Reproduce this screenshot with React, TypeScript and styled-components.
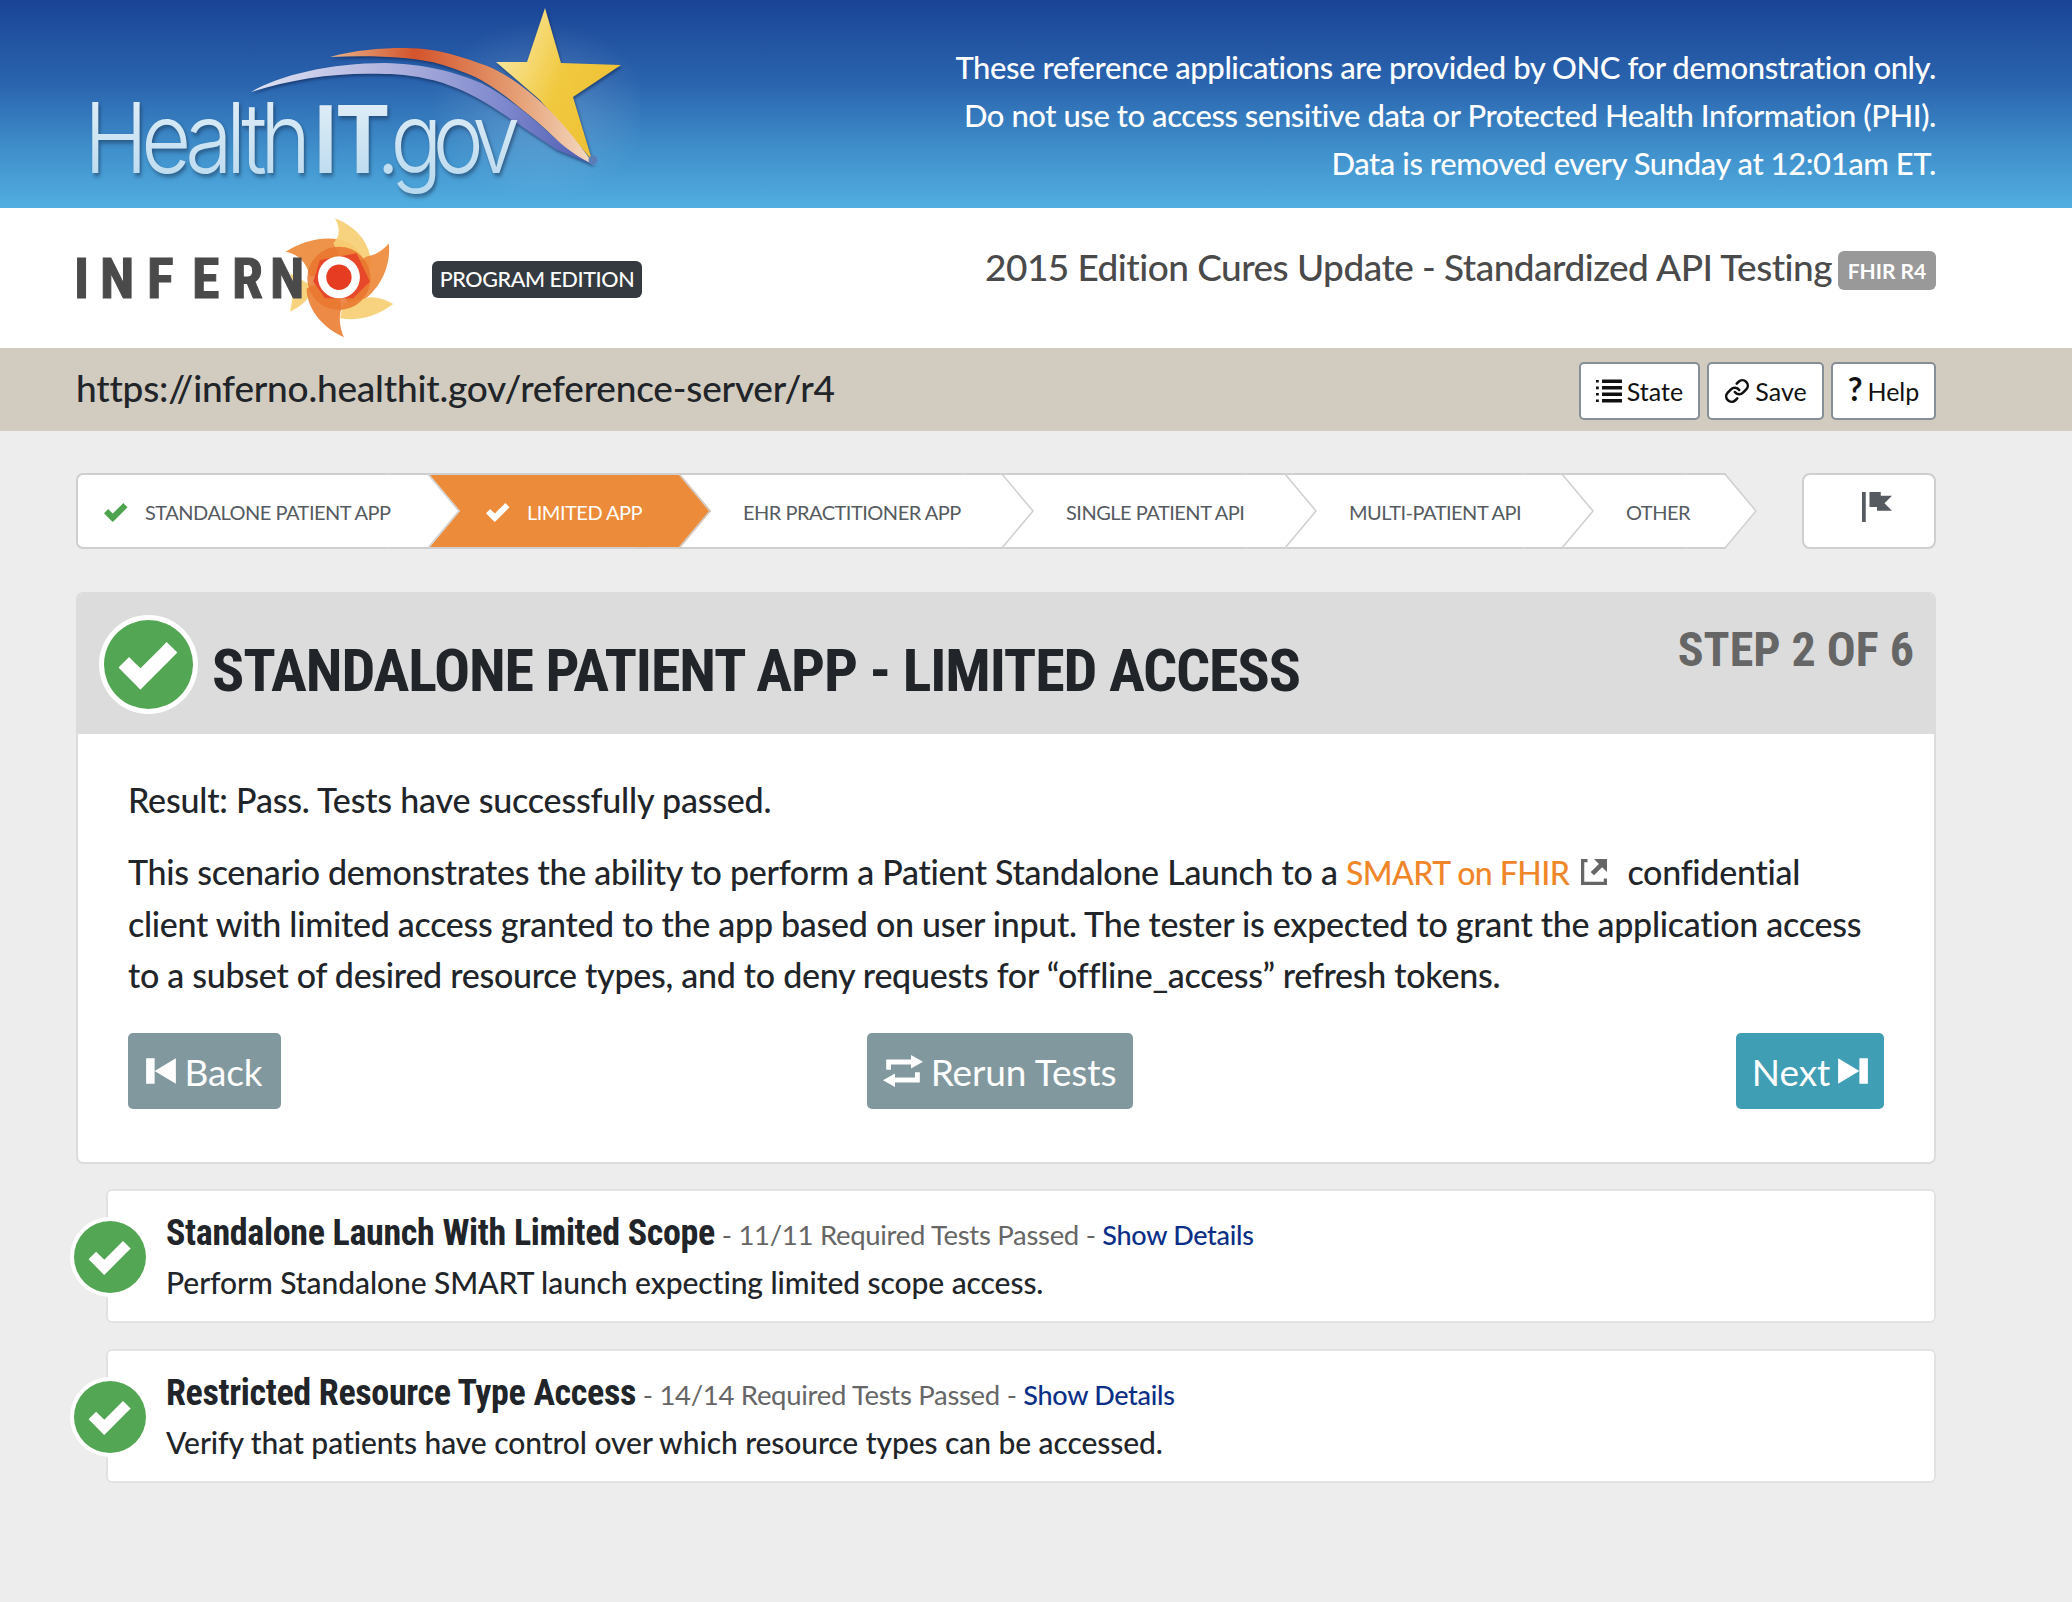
import React from 'react';
import styled, { createGlobalStyle } from 'styled-components';
import { Link } from 'lucide-react';

const GlobalStyle = createGlobalStyle`
  html, body {
    margin: 0;
    padding: 0;
    background: #ededed;
    font-family: 'Lato', 'Open Sans', sans-serif;
    color: #212529;
  }
`;

const Page = styled.div`
  min-height: 1602px;
  background: #ededed;
`;

const Banner = styled.header`
  height: 208px;
  display: flex;
  justify-content: space-between;
  background: linear-gradient(180deg, #1a4496 0%, #2a64ae 40%, #3f8fcb 72%, #52aee0 100%);
`;

const BannerLogo = styled.svg`
  width: 640px;
  height: 208px;
  flex: none;
`;

const LogoText = styled.text<{ $bold?: boolean }>`
  font-family: ${(p) => (p.$bold ? "'Liberation Sans'" : "'Inter'")}, sans-serif;
  font-weight: ${(p) => (p.$bold ? 700 : 300)};
  font-size: 98px;
  filter: drop-shadow(2px 3px 2px rgba(20, 40, 70, 0.5));
`;

const Swooshes = styled.g`
  filter: drop-shadow(1px 2px 1.5px rgba(15, 35, 80, 0.6));
`;

const BannerNotice = styled.div`
  padding: 43px 136px 0 0;
  color: #fff;
  text-align: right;
  font-size: 31px;
  font-weight: 500;
  line-height: 48px;
  letter-spacing: -0.43px;
`;

const Masthead = styled.div`
  height: 140px;
  background: #fff;
  display: flex;
  justify-content: space-between;
  padding: 0 136px 0 76px;
  box-sizing: border-box;
`;

const Brand = styled.div`
  display: flex;
  align-items: center;
`;

const InfernoLogo = styled.svg`
  width: 346px;
  height: 140px;
  margin-left: -6px;
  flex: none;
`;

const InfernoWord = styled.text`
  font-family: 'Roboto', sans-serif;
  font-stretch: 75%;
  font-weight: 700;
  font-size: 56px;
  fill: #4a4a4a;
  stroke: #4a4a4a;
  stroke-width: 1px;
`;

const EditionBadge = styled.span`
  margin: 2px 0 0 16px;
  width: 210px;
  height: 37px;
  background: #343a40;
  color: #fff;
  border-radius: 6px;
  font-size: 21.5px;
  font-weight: 500;
  letter-spacing: -0.4px;
  line-height: 37px;
  text-align: center;
  white-space: nowrap;
`;

const Subtitle = styled.div`
  display: flex;
  align-items: center;
  gap: 6px;
  height: 116px;
  font-size: 37px;
  font-weight: 500;
  letter-spacing: -0.53px;
  color: #4a4a4a;
`;

const VersionBadge = styled.span`
  width: 98px;
  height: 39px;
  margin-top: 8px;
  background: #999;
  color: #fff;
  border-radius: 6px;
  font-size: 21px;
  font-weight: 700;
  letter-spacing: 0;
  line-height: 39px;
  text-align: center;
`;

const ServerBar = styled.div`
  height: 83px;
  box-sizing: border-box;
  background: #d1cbc0;
  display: flex;
  align-items: center;
  justify-content: space-between;
  padding: 0 136px 0 76px;
`;

const ServerUrl = styled.div`
  margin-top: -4px;
  font-size: 37px;
  font-weight: 500;
  letter-spacing: -0.21px;
  color: #212529;
`;

const ServerActions = styled.div`
  display: flex;
  gap: 7px;
  margin-top: 3px;
`;

const ActionButton = styled.button<{ $width: number }>`
  width: ${(p) => p.$width}px;
  height: 58px;
  box-sizing: border-box;
  background: #fff;
  border: 2px solid #868e96;
  border-radius: 5px;
  display: flex;
  align-items: center;
  justify-content: center;
  gap: 5px;
  font-family: inherit;
  font-size: 25px;
  color: #111;
  padding: 0;
`;

const QuestionGlyph = styled.span`
  font-size: 32px;
  font-weight: 700;
  margin-top: -6px;
`;

const Main = styled.main`
  padding: 42px 136px 0 76px;
`;

const StepperRow = styled.div`
  display: flex;
  justify-content: space-between;
  height: 76px;
`;

const Stepper = styled.ol`
  display: flex;
  list-style: none;
  margin: 0;
  padding: 0;
`;

const Step = styled.li<{ $width: number; $lead: number; $active?: boolean; $order: number; $first?: boolean }>`
  position: relative;
  z-index: ${(p) => p.$order};
  width: ${(p) => p.$width}px;
  height: 76px;
  margin-right: 2px;
  box-sizing: border-box;
  display: flex;
  align-items: center;
  padding-left: ${(p) => p.$lead}px;
  background: ${(p) => (p.$active ? '#ec8c3a' : '#fff')};
  border: 2px solid #cfcfcf;
  border-right: 0;
  border-left: ${(p) => (p.$first ? '2px solid #cfcfcf' : '0')};
  border-radius: ${(p) => (p.$first ? '7px 0 0 7px' : '0')};
  color: ${(p) => (p.$active ? '#fff' : '#555b61')};
  font-size: 20px;
  letter-spacing: -0.5px;
  white-space: nowrap;

  &::before,
  &::after {
    content: '';
    position: absolute;
    right: -36px;
    width: 40px;
    height: 38px;
    box-sizing: border-box;
    background: ${(p) => (p.$active ? '#ec8c3a' : '#fff')};
    border-right: 2px solid #cfcfcf;
  }

  &::before {
    top: -2px;
    border-top: 2px solid #cfcfcf;
    transform: skewX(40deg);
    transform-origin: 50% 100%;
  }

  &::after {
    bottom: -2px;
    border-bottom: 2px solid #cfcfcf;
    transform: skewX(-40deg);
    transform-origin: 50% 0;
  }
`;

const StepContent = styled.span`
  position: relative;
  z-index: 1;
  margin-top: 2px;
  display: flex;
  align-items: center;
  gap: 17px;
`;

const FlagButton = styled.div`
  width: 134px;
  height: 76px;
  box-sizing: border-box;
  background: #fff;
  border: 2px solid #cfcfcf;
  border-radius: 8px;
  display: flex;
  justify-content: center;
  padding: 17px 0 0 16px;
`;

const Panel = styled.section`
  margin-top: 43px;
  background: #fff;
  border: 2px solid #dcdcdc;
  border-radius: 7px;
  overflow: hidden;
`;

const PanelHead = styled.div`
  position: relative;
  height: 140px;
  background: #dcdcdc;
  display: flex;
  align-items: center;
  gap: 14px;
  padding-left: 21px;
`;

const PanelTitle = styled.h1`
  margin: 12px 0 0;
  font-family: 'Roboto', sans-serif;
  font-stretch: 75%;
  font-weight: 700;
  font-size: 60px;
  letter-spacing: -1.15px;
  color: #212529;
  white-space: nowrap;
`;

const StepCount = styled.div`
  position: absolute;
  top: 27px;
  right: 20px;
  font-family: 'Roboto', sans-serif;
  font-stretch: 75%;
  font-weight: 700;
  font-size: 48px;
  color: #666;
`;

const PanelBody = styled.div`
  padding: 41px 50px 53px;
`;

const ResultLine = styled.p`
  margin: 0 0 21px;
  font-size: 34px;
  font-weight: 500;
  letter-spacing: -0.2px;
  line-height: 50px;
`;

const Description = styled.p`
  margin: 0;
  font-size: 34px;
  font-weight: 500;
  letter-spacing: -0.28px;
  line-height: 51px;
`;

const OrangeLink = styled.span`
  color: #f0862a;
  font-size: 32px;
  letter-spacing: -0.55px;
`;

const ExternalIcon = styled.svg`
  width: 26px;
  height: 26px;
  margin: 0 20px 0 12px;
  fill: #666;
`;

const NavRow = styled.div`
  display: flex;
  justify-content: space-between;
  margin-top: 33px;
`;

const NavButton = styled.div<{ $color: string; $width: number; $shift?: number }>`
  width: ${(p) => p.$width}px;
  height: 76px;
  margin-right: ${(p) => p.$shift ?? 0}px;
  background: ${(p) => p.$color};
  border-radius: 5px;
  display: flex;
  align-items: center;
  justify-content: center;
  gap: 8px;
  color: #fff;
  font-size: 37px;
  letter-spacing: -0.1px;
`;

const NavIcon = styled.svg<{ $w: number }>`
  width: ${(p) => p.$w}px;
  height: 34px;
  fill: #fff;
`;

const TestGroups = styled.div`
  margin: 25px 0 0 30px;
  display: flex;
  flex-direction: column;
  gap: 26px;
`;

const TestCard = styled.article`
  position: relative;
  height: 134px;
  box-sizing: border-box;
  background: #fff;
  border: 2px solid #e2e2e2;
  border-radius: 6px;
  padding: 21px 0 0 58px;
`;

const CardBadge = styled.div`
  position: absolute;
  left: -38px;
  top: 26px;
`;

const TestHeading = styled.div`
  display: flex;
  align-items: baseline;
  height: 47px;
  white-space: pre;
`;

const TestName = styled.span`
  font-family: 'Roboto', sans-serif;
  font-stretch: 75%;
  font-weight: 700;
  font-size: 36px;
  letter-spacing: -0.33px;
  color: #212529;
`;

const TestCount = styled.span`
  font-size: 27.5px;
  letter-spacing: -0.3px;
  color: #666;
`;

const DetailsLink = styled.span`
  font-size: 27px;
  font-weight: 500;
  letter-spacing: -0.3px;
  color: #0b2f87;
`;

const TestSummary = styled.div`
  font-size: 30px;
  font-weight: 500;
  letter-spacing: -0.07px;
  line-height: 46px;
`;

const CHECK = 'M6.41 0l-.69.72-2.78 2.78-.81-.78-.72-.72-1.41 1.41.72.72 1.5 1.5.69.72.72-.72 3.5-3.5.72-.72-1.44-1.41z';

const CheckIcon: React.FC<{ size: number; color: string }> = ({ size, color }) => (
  <svg width={size} height={size} viewBox="0 0 8 8">
    <path d={CHECK} transform="translate(0 1)" fill={color} />
  </svg>
);

const PassBadge: React.FC<{ size: number; ring: number; check: number }> = ({ size, ring, check }) => (
  <svg width={size} height={size} viewBox={`0 0 ${size} ${size}`}>
    <circle cx={size / 2} cy={size / 2} r={size / 2} fill="#fff" />
    <circle cx={size / 2} cy={size / 2} r={size / 2 - ring} fill="#53a653" />
    <svg x={(size - check) / 2} y={(size - check) / 2} width={check} height={check} viewBox="0 0 8 8">
      <path d={CHECK} transform="translate(0 1)" fill="#fff" />
    </svg>
  </svg>
);

const steps = [
  { label: 'STANDALONE PATIENT APP', width: 348, lead: 26, done: true },
  { label: 'LIMITED APP', width: 249, lead: 60, done: true, active: true },
  { label: 'EHR PRACTITIONER APP', width: 321, lead: 66 },
  { label: 'SINGLE PATIENT API', width: 281, lead: 66 },
  { label: 'MULTI-PATIENT API', width: 275, lead: 66 },
  { label: 'OTHER', width: 161, lead: 66 },
];

const petals = [
  { d: 'M60 305 C 70 270 72 220 60 190 L 130 230 L 110 270 C 95 285 80 295 60 305 Z', fill: '#f6cf74' },
  { d: 'M47 125 C 100 90 180 70 240 100 C 270 120 280 140 285 170 L 120 200 C 110 160 90 135 47 125 Z', fill: '#ec8b3b' },
  { d: 'M195 25 C 260 50 305 100 305 175 L 240 200 L 190 100 C 210 80 212 55 195 25 Z', fill: '#f6cf74' },
  { d: 'M357 100 C 365 180 320 260 240 295 L 200 200 L 290 140 C 320 135 340 120 357 100 Z', fill: '#ee8a3c' },
  { d: 'M370 282 C 320 320 260 335 210 325 L 220 280 L 300 262 C 325 262 350 270 370 282 Z', fill: '#f6cf74' },
  { d: 'M222 382 C 150 350 110 290 110 235 L 200 200 L 215 295 C 205 320 210 355 222 382 Z', fill: '#ec8036' },
];

const App: React.FC = () => (
  <Page>
    <GlobalStyle />
    <Banner>
      <BannerLogo viewBox="0 0 640 208">
        <defs>
          <radialGradient id="starGlow">
            <stop offset="0" stopColor="#fff" stopOpacity="0.18" />
            <stop offset="1" stopColor="#fff" stopOpacity="0" />
          </radialGradient>
          <linearGradient id="starFill" x1="0" y1="0" x2="1" y2="0.5">
            <stop offset="0" stopColor="#fbeeb8" />
            <stop offset="0.6" stopColor="#f1c93f" />
            <stop offset="1" stopColor="#eec136" />
          </linearGradient>
          <linearGradient id="swooshOrange" x1="0" y1="0" x2="1" y2="0">
            <stop offset="0" stopColor="#e8b48a" />
            <stop offset="0.32" stopColor="#d4542c" />
            <stop offset="0.7" stopColor="#e59d72" />
            <stop offset="1" stopColor="#f4dcc4" />
          </linearGradient>
          <linearGradient id="swooshPurple" x1="0" y1="0" x2="1" y2="0">
            <stop offset="0" stopColor="#dfe2f2" />
            <stop offset="0.4" stopColor="#b0b4de" />
            <stop offset="0.75" stopColor="#7c86cc" />
            <stop offset="1" stopColor="#4a5aaf" />
          </linearGradient>
          <linearGradient id="logoText" x1="0" y1="0" x2="0" y2="1">
            <stop offset="0" stopColor="#e6f1f8" />
            <stop offset="1" stopColor="#b6d8ee" />
          </linearGradient>
        </defs>
        <ellipse cx="540" cy="110" rx="110" ry="90" fill="url(#starGlow)" />
        <Swooshes>
          <polygon points="545,8 561,63 621,65 573,97 592,160 540,100 496,62 527,62" fill="url(#starFill)" />
          <path d="M251 92 C 280 75 330 63 385 63 C 425 64 455 72 481 83 C 510 98 535 120 557 140 L 594 165 L 557 150 C 535 135 515 122 500 112 C 480 98 460 89 443 83 C 420 76 400 74 385 74 C 340 72 295 78 251 92 Z" fill="url(#swooshPurple)" />
          <path d="M330 57 C 355 50 380 48 404 48 C 425 48 440 51 454 55 C 470 60 484 64 496 70 C 515 80 530 92 542 103 C 560 120 577 140 594 165 C 580 158 568 150 557 140 C 545 128 532 117 519 107 C 507 97 495 88 481 80 C 468 73 455 69 443 65 C 430 61 416 59 404 58 C 380 56 355 56 330 57 Z" fill="url(#swooshOrange)" />
        </Swooshes>
        <circle cx="593" cy="160" r="4.5" fill="#5a7db8" />
        <LogoText transform="translate(84 173) scale(.88 1)" fill="url(#logoText)" textLength="258" lengthAdjust="spacing">Health</LogoText>
        <LogoText $bold transform="translate(314 173) scale(.85 1)" fill="url(#logoText)">IT</LogoText>
        <LogoText transform="translate(376 173) scale(.88 1)" fill="url(#logoText)" textLength="164" lengthAdjust="spacing">.gov</LogoText>
      </BannerLogo>
      <BannerNotice>
        <div>These reference applications are provided by ONC for demonstration only.</div>
        <div>Do not use to access sensitive data or Protected Health Information (PHI).</div>
        <div>Data is removed every Sunday at 12:01am ET.</div>
      </BannerNotice>
    </Banner>

    <Masthead>
      <Brand>
        <InfernoLogo viewBox="70 208 346 140">
          <g transform="translate(270 210) scale(0.333)">
            {petals.map((p) => (
              <path key={p.d} d={p.d} fill={p.fill} opacity="0.92" />
            ))}
            <circle cx="207" cy="205" r="95" fill="#e9762e" opacity="0.85" />
            <polygon points="150,150 260,130 300,215 250,265 165,265 130,215" fill="#e8482a" />
            <circle cx="207" cy="202" r="63" fill="#fff" />
            <circle cx="207" cy="202" r="38" fill="#e63c22" />
          </g>
          <InfernoWord x="74 100 147 192 232 270" y="298">INFERN</InfernoWord>
        </InfernoLogo>
        <EditionBadge>PROGRAM EDITION</EditionBadge>
      </Brand>
      <Subtitle>
        2015 Edition Cures Update - Standardized API Testing
        <VersionBadge>FHIR R4</VersionBadge>
      </Subtitle>
    </Masthead>

    <ServerBar>
      <ServerUrl>https://inferno.healthit.gov/reference-server/r4</ServerUrl>
      <ServerActions>
        <ActionButton $width={121}>
          <svg width="26" height="24" viewBox="0 0 13 12" fill="#111">
            <path d="M0 .5h1.4v1.3H0zM0 3.8h1.4v1.3H0zM0 7h1.4v1.3H0zM0 10.2h1.4v1.3H0zM3 .2h10v1.8H3zM3 3.5h10v1.8H3zM3 6.7h10v1.8H3zM3 10h10v1.8H3z" />
          </svg>
          State
        </ActionButton>
        <ActionButton $width={117}>
          <Link size={26} strokeWidth={2.4} color="#111" />
          Save
        </ActionButton>
        <ActionButton $width={105}>
          <QuestionGlyph>?</QuestionGlyph>
          Help
        </ActionButton>
      </ServerActions>
    </ServerBar>

    <Main>
      <StepperRow>
        <Stepper>
          {steps.map((s, i) => (
            <Step key={s.label} $width={s.width} $lead={s.lead} $active={s.active} $first={i === 0} $order={steps.length - i}>
              <StepContent>
                {s.done && <CheckIcon size={24} color={s.active ? '#fff' : '#4ea44e'} />}
                {s.label}
              </StepContent>
            </Step>
          ))}
        </Stepper>
        <FlagButton>
          <svg width="30" height="30" viewBox="0 0 8 8" fill="#555b61">
            <path d="M0 0v8h1v-8h-1zm2 0v4h2v1h4l-2-1.97 2-2.03h-3v-1h-3z" />
          </svg>
        </FlagButton>
      </StepperRow>

      <Panel>
        <PanelHead>
          <PassBadge size={99} ring={5} check={60} />
          <PanelTitle>STANDALONE PATIENT APP - LIMITED ACCESS</PanelTitle>
          <StepCount>STEP 2 OF 6</StepCount>
        </PanelHead>
        <PanelBody>
          <ResultLine>Result: Pass. Tests have successfully passed.</ResultLine>
          <Description>
            This scenario demonstrates the ability to perform a Patient Standalone Launch to a <OrangeLink>SMART on FHIR</OrangeLink>
            <ExternalIcon viewBox="0 0 8 8">
              <path d="M0 0v8h8v-2h-1v1h-6v-6h1v-1h-2zm4 0l1.5 1.5-2.5 2.5 1 1 2.5-2.5 1.5 1.5v-4h-4z" />
            </ExternalIcon>
            confidential client with limited access granted to the app based on user input. The tester is expected to grant the application access to a subset of desired resource types, and to deny requests for “offline_access” refresh tokens.
          </Description>
          <NavRow>
            <NavButton $color="#81999e" $width={153}>
              <NavIcon $w={30} viewBox="0 0 7 8">
                <path d="M0 1v6h2v-6h-2zm2 3l5 3v-6l-5 3z" />
              </NavIcon>
              Back
            </NavButton>
            <NavButton $color="#81999e" $width={266} $shift={18}>
              <NavIcon $w={40} viewBox="0 0 10 8">
                <path d="M7 0l3 1.7-3 1.7V2.4H2v1.3H.8V1.1H7zM3 8L0 6.3l3-1.7v1h5V4.3h1.2v2.6H3z" />
              </NavIcon>
              Rerun Tests
            </NavButton>
            <NavButton $color="#3f9eb3" $width={148}>
              Next
              <NavIcon $w={30} viewBox="0 0 7 8">
                <path d="M0 1v6l5-3-5-3zm5 3v3h2v-6h-2v3z" />
              </NavIcon>
            </NavButton>
          </NavRow>
        </PanelBody>
      </Panel>

      <TestGroups>
        <TestCard>
          <CardBadge><PassBadge size={80} ring={4} check={43} /></CardBadge>
          <TestHeading>
            <TestName>Standalone Launch With Limited Scope</TestName>
            <TestCount> - 11/11 Required Tests Passed - </TestCount>
            <DetailsLink>Show Details</DetailsLink>
          </TestHeading>
          <TestSummary>Perform Standalone SMART launch expecting limited scope access.</TestSummary>
        </TestCard>
        <TestCard>
          <CardBadge><PassBadge size={80} ring={4} check={43} /></CardBadge>
          <TestHeading>
            <TestName>Restricted Resource Type Access</TestName>
            <TestCount> - 14/14 Required Tests Passed - </TestCount>
            <DetailsLink>Show Details</DetailsLink>
          </TestHeading>
          <TestSummary>Verify that patients have control over which resource types can be accessed.</TestSummary>
        </TestCard>
      </TestGroups>
    </Main>
  </Page>
);

export default App;
